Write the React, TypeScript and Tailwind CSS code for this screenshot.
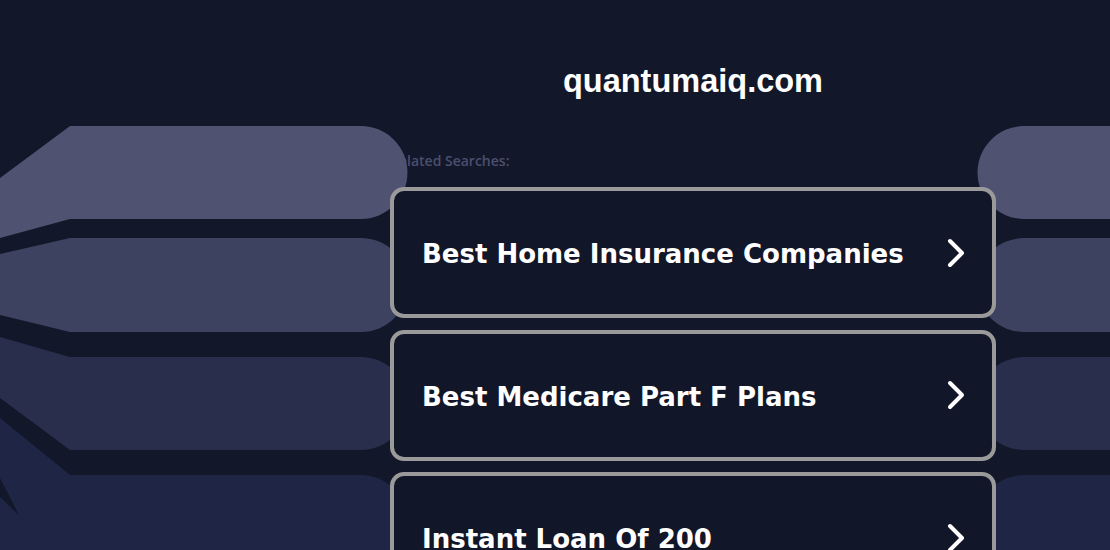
const searches = [
  'Best Home Insurance Companies',
  'Best Medicare Part F Plans',
  'Instant Loan Of 200',
];

// background ribbons, left and right of the list
const ribbons = [
  { fill: '#4f5371', top: 126, bottom: 219, left: 'M0,178 L70,126', tail: 'H70 L0,238 Z' },
  { fill: '#3c4260', top: 238, bottom: 332, left: 'M0,254 L70,238', tail: 'H70 L0,315 Z' },
  { fill: '#282e4b', top: 357, bottom: 450, left: 'M0,337 L70,357', tail: 'H70 L0,398 Z' },
  { fill: '#1f2645', top: 475, bottom: 568, left: 'M0,418 L70,475', tail: 'H46 L0,478 Z' },
];

function Ribbons() {
  return (
    <svg
      className="absolute inset-0 z-10 pointer-events-none"
      width="1110"
      height="550"
      viewBox="0 0 1110 550"
    >
      {ribbons.map((r) => {
        const rad = (r.bottom - r.top) / 2;
        return (
          <g key={r.top} fill={r.fill}>
            <path d={`${r.left} H361 A${rad} ${rad} 0 0 1 361,${r.bottom} ${r.tail}`} />
            <path d={`M1120,${r.top} H1024 A${rad} ${rad} 0 0 0 1024,${r.bottom} H1120 Z`} />
          </g>
        );
      })}
      <path d="M0,497 L74,568 H0 Z" fill="#1f2645" />
    </svg>
  );
}

function Chevron() {
  return (
    <svg width="22" height="30" viewBox="0 0 22 30" fill="none">
      <polyline
        points="4,3 16,15 4,27"
        stroke="white"
        strokeWidth="4"
        strokeLinecap="round"
        strokeLinejoin="round"
      />
    </svg>
  );
}

export default function App() {
  return (
    <div className="relative w-[1110px] h-[550px] overflow-hidden bg-[#121729]">
      <Ribbons />

      <div className="ml-[390px] w-[606px] pt-[65px]">
        <h1
          className="text-center text-[32.5px] leading-[32px] font-bold text-white"
          style={{ fontFamily: '"Liberation Sans", Arial, sans-serif' }}
        >
          quantumaiq.com
        </h1>

        <p
          className="mt-[55px] text-[14px] leading-[18px] font-semibold text-[#4b4f6e]"
          style={{ fontFamily: '"Open Sans", sans-serif' }}
        >
          Related Searches:
        </p>

        <div className="relative z-20 mt-[17px] flex flex-col gap-[11.5px]">
          {searches.map((s) => (
            <a
              key={s}
              href="#"
              className="flex h-[131px] items-center justify-between rounded-[14px] border-4 border-[#9a9a9a] bg-[#121629] pl-[28px] pr-[24px]"
            >
              <span
                className="pt-1 text-[26px] font-bold text-white"
                style={{ fontFamily: '"DejaVu Sans", Verdana, sans-serif' }}
              >
                {s}
              </span>
              <Chevron />
            </a>
          ))}
        </div>
      </div>
    </div>
  );
}
